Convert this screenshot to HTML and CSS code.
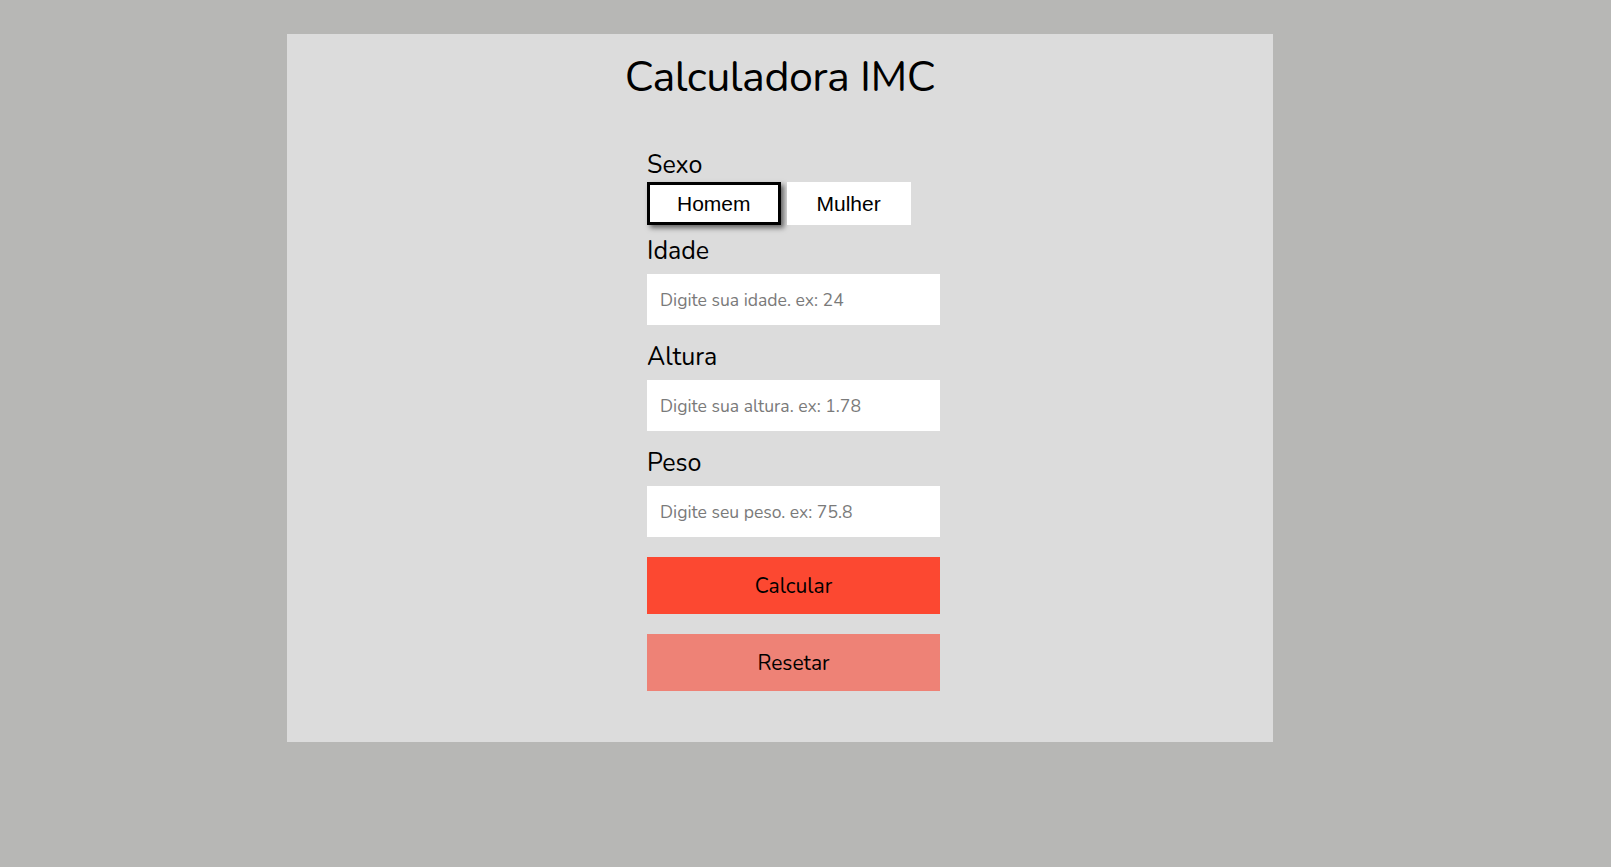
FILE: index.html
```html
<!DOCTYPE html>
<html lang="pt-BR">
<head>
<meta charset="utf-8">
<title>Calculadora IMC</title>
<link rel="stylesheet" href="styles.css">
</head>
<body>
  <main class="card">
    <h1 class="title">Calculadora IMC</h1>
    <form class="form">
      <label class="label">Sexo</label>
      <div class="sex-group">
        <button type="button" class="sex-btn active">Homem</button>
        <button type="button" class="sex-btn">Mulher</button>
      </div>
      <label class="label" for="idade">Idade</label>
      <input class="field" id="idade" type="text" placeholder="Digite sua idade. ex: 24">
      <label class="label" for="altura">Altura</label>
      <input class="field" id="altura" type="text" placeholder="Digite sua altura. ex: 1.78">
      <label class="label" for="peso">Peso</label>
      <input class="field" id="peso" type="text" placeholder="Digite seu peso. ex: 75.8">
      <button type="button" class="action calc">Calcular</button>
      <button type="button" class="action reset">Resetar</button>
    </form>
  </main>
</body>
</html>
```
FILE: styles.css
```css
* { box-sizing: border-box; }
html, body { margin: 0; height: 100%; }
body {
  background: #b7b7b5;
  padding: 34px 0 0 287px;
  font-family: "Nunito", "Lato", "Noto Sans", sans-serif;
  color: #000;
}
.card {
  width: 986px;
  height: 708px;
  background: #dcdcdc;
  padding-top: 15px;
}
.title {
  margin: 0;
  text-align: center;
  font-weight: 400;
  font-size: 43px;
  line-height: 56px;
  letter-spacing: -0.5px;
}
.form {
  width: 293px;
  margin: 46px 0 0 360px;
  display: flex;
  flex-direction: column;
}
.label {
  font-size: 25px;
  line-height: 28px;
}
.sex-group {
  display: flex;
  gap: 6px;
  margin: 3px 0 12px;
}
.sex-btn {
  font-family: "Liberation Sans", Arial, sans-serif;
  font-size: 21px;
  height: 43px;
  padding: 0 27px;
  background: #fff;
  border: 3px solid #fff;
  color: #000;
}
.sex-btn.active {
  border-color: #000;
  box-shadow: 3px 3px 5px rgba(0,0,0,0.55);
}
.field {
  height: 51px;
  border: 0;
  background: #fff;
  padding: 0 13px;
  margin: 9px 0 18px;
  font-family: inherit;
  font-size: 17.6px;
  outline: none;
}
.field::placeholder { color: #7a7a7a; }
.action {
  height: 57px;
  border: 0;
  font-family: inherit;
  font-size: 21px;
  color: #000;
}
.calc { background: #fc4831; margin: 2px 0 20px; }
.reset { background: #ee8276; }
```
